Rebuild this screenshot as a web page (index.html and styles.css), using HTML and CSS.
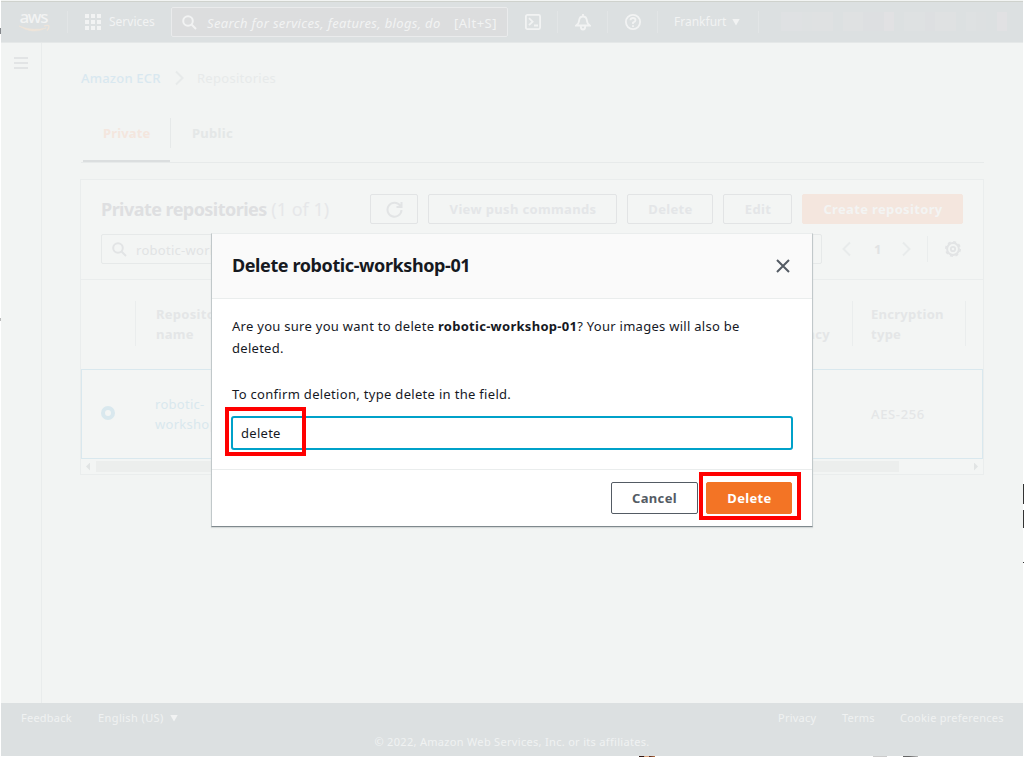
FILE: index.html
```html
<!DOCTYPE html>
<html lang="en">
<head>
<meta charset="utf-8">
<title>Amazon ECR</title>
<link rel="stylesheet" href="styles.css">
</head>
<body>
<div class="app">
  <header class="topbar">
    <div class="logo"><svg width="32" height="24" viewBox="0 0 32 24"><text x="0.5" y="12" class="aws-text" textLength="29">aws</text><path d="M0 15Q14 24 27 17Q14 20.500 0 15z" fill="#efe4d9" stroke="#efe4d9" stroke-width=".6"/><path d="M25 15q5-1.500 5 .5q0 2-2 4" fill="none" stroke="#efe4d9" stroke-width="1.200"/></svg></div>
    <i class="vline v1"></i>
    <svg class="grid-icon" width="16" height="16" viewBox="0 0 16 16" fill="#f2f3f3"><path d="M0 0h4v4H0zM6 0h4v4H6zM12 0h4v4h-4zM0 6h4v4H0zM6 6h4v4H6zM12 6h4v4h-4zM0 12h4v4H0zM6 12h4v4H6zM12 12h4v4h-4z"/></svg>
    <span class="services">Services</span>
    <div class="topsearch">
      <svg width="15" height="15" viewBox="0 0 15 15" fill="none" stroke="#f2f3f3" stroke-width="2"><circle cx="6" cy="6" r="4.800"/><path d="M9.500 9.500l4.500 4.500"/></svg>
      <span class="ph">Search for services, features, blogs, do</span><span class="key">[Alt+S]</span>
    </div>
    <svg class="ti t1" width="16" height="16" viewBox="0 0 16 16" fill="none" stroke="#f2f3f3" stroke-width="1.800"><rect x=".9" y=".9" width="14.200" height="14.200" rx="1.500"/><path d="M4 4.200l3.600 3.500L4 11.200M9 11.500h4"/></svg>
    <i class="vline v2"></i>
    <svg class="ti t2" width="16" height="17" viewBox="0 0 16 17" fill="none" stroke="#f2f3f3" stroke-width="1.800"><path d="M1.200 11.500q2.800-2 3-5.500Q4.700 2.500 8 2.500T11.800 6q.2 3.500 3 5.500zM8 0v2.500M5.800 12.500q0 3 2.200 3t2.200-3"/></svg>
    <i class="vline v3"></i>
    <svg class="ti t3" width="16" height="16" viewBox="0 0 16 16" fill="none" stroke="#f2f3f3" stroke-width="1.800"><circle cx="8" cy="8" r="7.100"/><path d="M5.500 6.300Q5.500 4 8 4t2.500 2.200Q10.500 7.500 8 8.600V10M8 11.200v1.700"/></svg>
    <i class="vline v4"></i>
    <span class="region">Frankfurt</span><i class="caret"></i>
    <i class="vline v5"></i>
    <div class="account"><i class="m0 slim"></i><i class="m3"></i><i class="m1 slim"></i><i class="m2"></i><i class="m0 slim"></i><i class="m2"></i><i class="m4"></i><i class="m5 slim"></i><i class="m0 slim"></i><i class="m1"></i><i class="m4 slim"></i><i class="m2"></i><i class="m0 slim"></i><i class="m1 slim"></i><i class="m6 slim"></i><i class="m0 slim"></i><i class="m5 slim"></i></div>
  </header>
  <div class="middle">
    <aside class="rail"><i></i><i></i><i></i></aside>
    <main class="content">
      <nav class="crumbs"><span class="link">Amazon ECR</span><svg width="9" height="16" viewBox="0 0 9 16" fill="none" stroke="#e7eaea" stroke-width="2"><path d="M1 1.500l6.500 6.500L1 14.500"/></svg><span class="crumb">Repositories</span></nav>
      <div class="tabs"><div class="tab on"><span>Private</span></div><div class="tab"><span>Public</span></div></div>
      <section class="panel">
        <div class="phead">
          <h2><span class="ptitle">Private repositories</span> <span class="count">(1 of 1)</span></h2>
          <div class="btn b1"><svg width="17" height="17" viewBox="0 0 17 17" fill="none" stroke="#e2e4e5" stroke-width="2"><path d="M14.300 4.800A7 7 0 1 0 15.500 9M15.500 1v5h-5"/></svg></div>
          <div class="btn b2"><span>View push commands</span></div>
          <div class="btn b3"><span>Delete</span></div>
          <div class="btn b4"><span>Edit</span></div>
          <div class="btn b5"><span>Create repository</span></div>
        </div>
        <div class="filter">
          <div class="finput"><svg width="15" height="15" viewBox="0 0 15 15" fill="none" stroke="#e2e4e5" stroke-width="2"><circle cx="6" cy="6" r="4.800"/><path d="M9.500 9.500l4.500 4.500"/></svg><span>robotic-workshop-01</span></div>
          <svg class="prev" width="9" height="16" viewBox="0 0 9 16" fill="none" stroke="#e8ebeb" stroke-width="2"><path d="M8 1.500L1.500 8 8 14.500"/></svg>
          <b class="page">1</b>
          <svg class="next" width="9" height="16" viewBox="0 0 9 16" fill="none" stroke="#e8ebeb" stroke-width="2"><path d="M1 1.500L7.500 8 1 14.500"/></svg>
          <i class="fdiv"></i>
          <svg class="gear" width="16" height="16" viewBox="0 0 16 16" fill="none" stroke="#e2e4e5"><circle cx="8" cy="8" r="7.200" stroke-width="1.600" stroke-dasharray="3 2.655"/><circle cx="8" cy="8" r="5.900" stroke-width="2"/><circle cx="8" cy="8" r="2.200" stroke-width="1.800"/></svg>
        </div>
        <div class="trow thead">
          <div class="c0"></div><div class="c1"><span>Repository<br>name</span></div><div class="c2"><span>frequency</span></div><div class="c3"><span>Encryption<br>type</span></div><div class="c4"></div>
        </div>
        <div class="trow selected">
          <div class="c0"><i class="radio"></i></div><div class="c1"><span>robotic-<br>workshop-01</span></div><div class="c2"></div><div class="c3"><span>AES-256</span></div>
        </div>
        <div class="scroll"><i class="al"></i><i class="thumb"></i><i class="ar"></i></div>
      </section>
    </main>
  </div>
  <footer class="footer">
    <div class="frow"><span class="f1">Feedback</span><span class="f2">English (US)</span><i class="caret"></i><span class="f3">Privacy</span><span class="f4">Terms</span><span class="f5">Cookie preferences</span></div>
    <div class="copy"><span>© 2022, Amazon Web Services, Inc. or its affiliates.</span></div>
  </footer>
</div>
<div class="modal">
  <div class="mhead"><h1><span>Delete robotic-workshop-01</span></h1><svg width="14" height="14" viewBox="0 0 14 14" fill="none" stroke="#545b64" stroke-width="2"><path d="M1 1l12 12M13 1L1 13"/></svg></div>
  <div class="mbody">
    <p><span class="q1">Are you sure you want to delete <b>robotic-workshop-01</b>? Your images will also be</span><br>deleted.</p>
    <label><span class="q2">To confirm deletion, type delete in the field.</span></label>
    <div class="field"><span>delete</span></div>
  </div>
  <div class="mfoot"><div class="mbtn cancel"><span>Cancel</span></div><div class="mbtn primary"><span>Delete</span></div></div>
  <i class="mark mark-field"></i><i class="mark mark-delete"></i>
</div>
<i class="edge e1"></i><i class="edge e2"></i><i class="edge e3"></i><i class="edge e4"></i><i class="edge e5"></i><i class="edge e6"></i><i class="edge e7"></i><i class="edge e8"></i>
</body>
</html>
```
FILE: styles.css
```css
*{box-sizing:border-box}
body{margin:0;width:1024px;height:757px;overflow:hidden;position:relative;background:#fff;font:13px/20px "Noto Sans","Open Sans",sans-serif;letter-spacing:.28px;color:#16191f}
h1,h2,p{margin:0}
i{display:block;flex:none;font-style:normal}
svg{display:block;flex:none}
span{white-space:nowrap}
.app{margin-left:1px;width:1022px;height:756px;display:flex;flex-direction:column;background:#f2f4f3}
.topbar{height:42px;flex:none;border-top:1px solid #cfd2cd;margin-top:1px;background:#dce0e1;border-bottom:1px solid #e5e8e8;display:flex;align-items:center;color:#f2f3f3;font-size:12px;letter-spacing:0}
.logo{margin-left:18px;width:32px;padding-top:2px}
.logo svg{overflow:visible}
.aws-text{font:500 17px "Noto Sans",sans-serif;fill:#f2f3f3}
.vline{width:1px;height:22px;background:#e2e5e6}
.v1{margin-left:16px}
.grid-icon{margin-left:17px}
.services{margin-left:8px;width:62px}
.topsearch{height:30px;width:337px;border:1px solid #eaebec;border-radius:2px;background:#dcddde;display:flex;align-items:center;padding:1px 10px 0 10px;font-size:13px}
.ph{margin-left:10px;width:236px;font-style:italic;letter-spacing:.34px}
.key{margin-left:auto;letter-spacing:.5px}
.t1{margin-left:17px}.v2{margin-left:16px}.t2{margin-left:17px}.v3{margin-left:16px}.t3{margin-left:17px}.v4{margin-left:16px}
.region{margin-left:16px;width:54px}
.caret{width:8px;height:7px;background:#f2f3f3;clip-path:polygon(0 0,100% 0,50% 100%);margin-left:4px}
.v5{margin-left:18px}
.account{display:flex;height:19px;margin:-1px 0 0 12px;width:236px}
.account i{flex:2 1 0}
.account .slim{flex-grow:1}
.m0{background:#dce0e1}.m1{background:#dee1e2}.m2{background:#dfe1e2}.m3{background:#dfe1e3}.m4{background:#dddfe1}.m5{background:#e1e1e3}.m6{background:#dde0e1}
.middle{flex:1;display:flex;min-height:0}
.rail{width:41px;border-right:1px solid #e9ecec;padding:14px 0 0 13px;display:flex;flex-direction:column;gap:3px}
.rail i{width:14px;height:2px;background:#e2e4e5}
.content{margin-left:39px;width:903px}
.crumbs{display:flex;align-items:center;height:20px;margin-top:25px;color:#e7eaea}
.crumbs svg{margin:0 13px 0 14px}
.link{color:#d9e8f0;width:80px;font-weight:500;letter-spacing:.2px}
.tabs{display:flex;height:45px;margin-top:30px;border-bottom:1px solid #e7eaea;font-weight:700;color:#e4e7e7}
.tab{position:relative;padding:5px 20px 0}
.tab.on{color:#f4e6de;width:87px;margin-left:2px;border-bottom:2px solid #dbdedf}
.tab.on span{letter-spacing:.15px}
.tab.on:after{content:"";position:absolute;right:-1px;top:0;width:1px;height:30px;background:#e6e9e9}
.tab:last-child{padding-left:22px}
.panel{margin:16px 0 0 -1px;width:904px;height:296px;border:1px solid #eaeded;background:#f3f5f4}
.phead{height:30px;margin:14px 20px 0;display:flex}
h2{font-size:18px;line-height:30px;width:269px;color:#dedfe1;white-space:nowrap;letter-spacing:0}
.ptitle{font-weight:700;letter-spacing:-.55px}
.count{font-weight:400;color:#e6e7e9}
.btn{height:30px;border:1px solid #e2e4e5;border-radius:2px;display:flex;align-items:center;justify-content:center;font-weight:700;letter-spacing:.35px;color:#e4e6e8;flex:none}
.btn span{padding-left:1px}
.b1{width:48px}.b2{width:189px;margin-left:10px}.b3{width:86px;margin-left:10px}.b4{width:69px;margin-left:10px}.b5{width:161px;margin-left:10px;background:#f4e6de;border-color:#f4e6de;color:#f3f4f3}
.filter{display:flex;align-items:center;height:30px;margin:10px 20px 0}
.finput{width:721px;height:30px;border:1px solid #e6e9e9;border-radius:2px;padding-left:10px;display:flex;align-items:center;color:#e1e3e4}
.finput span{margin:2px 0 0 9px}
.prev{margin-left:20px}.page{width:8px;margin-left:23px;color:#e1e3e4}.next{margin-left:20px}.fdiv{height:26px;width:1px;background:#eaeded;margin-left:16px}.gear{margin-left:17px}
.trow{display:flex;color:#e4e6e7}
.thead{border-top:1px solid #eaeded;margin-top:15px;height:90px;padding:21px 0 23px;font-weight:700}
.trow>div{flex:none}
.c0{width:55px}.thead .c0,.thead .c2,.thead .c3{border-right:1px solid #eaeded}
.c1{width:559px;padding:3px 0 0 20px}.c2{width:158px;padding:23px 22px 0 0;text-align:right}.c3{width:113px;padding:3px 0 0 18px}
.selected{border:1px solid #d9e8ee;height:90px;width:902px}
.selected .c0{display:flex;align-items:center;padding:0 0 2px 19px}.radio{width:14px;height:14px;border:4px solid #d9e8ee;border-radius:50%}
.selected .c1{padding-top:24px;padding-left:18px;color:#d9e8ee}.selected .c3{padding-top:34px;padding-left:17px;font-weight:500;letter-spacing:.65px}
.scroll{height:14px;display:flex;align-items:center;padding:1px 5px 0}
.thumb{width:803px;height:11px;background:#eceeed;margin-left:6px}
.al,.ar{width:4px;height:8px;background:#e1e4e4;clip-path:polygon(0 50%,100% 0,100% 100%)}.ar{margin-left:auto;clip-path:polygon(0 0,100% 50%,0 100%)}
.footer{height:53px;flex:none;background:#dce0e1;color:#f0f2f2;font-size:11px;letter-spacing:.24px}
.frow{display:flex;align-items:center;height:20px;margin-top:5px;padding-left:20px}
.frow span{flex:none}.f1{width:77px}.f2{width:68px;letter-spacing:.4px}.f3{width:64px;margin-left:600px}.f4{width:58px}
.copy{text-align:center;margin-top:4px;letter-spacing:.31px}
.modal{position:absolute;left:211px;top:233px;width:602px;height:294px;background:#fff;border:1px solid #c1c8ca;border-top-color:#eaeded;border-bottom-color:#7f898d;display:flex;flex-direction:column;box-shadow:0 1px 1px #d5d9d9}
.mhead{height:65px;background:#fafafa;border-bottom:1px solid #eaeded;display:flex;align-items:center;justify-content:space-between;padding:0 22px 0 20px}
h1{font-size:18px;line-height:22px;font-weight:700;letter-spacing:-.4px;padding-bottom:2px}
.mbody{height:170px;padding:16px 19px 0 20px;line-height:22px}
.mbody label{display:block;margin-top:24px;letter-spacing:.31px}
.field{border:2px solid #00a1c9;border-radius:3px;height:34px;margin:11px 0 0 -1px;padding:0 8px;line-height:30px}
.mfoot{border-top:1px solid #eaeded;flex:1;padding:12px 20px 0 0;display:flex;justify-content:flex-end;gap:8px}
.mbtn{height:32px;width:87px;border-radius:2px;display:flex;align-items:center;justify-content:center;font-weight:700;letter-spacing:.35px;border:1px solid #545b64;color:#545b64}
.primary{background:#f37425;border-color:#f37425;color:#fff;width:86px}
.primary span{padding-left:1px}
.mark{position:absolute;border:4px solid #f00}
.mark-field{left:13px;top:173px;width:81px;height:49px}
.mark-delete{left:487px;top:238px;width:102px;height:48px}
.edge{position:absolute;background:#333}
.e1{left:1023px;top:484px;width:1px;height:20px}.e2{left:1023px;top:510px;width:1px;height:18px}.e3{left:1023px;top:562px;width:1px;height:1px}
.e4{left:0;top:28px;width:1px;height:6px;background:#85888c}.e5{left:639px;top:756px;width:16px;height:1px;background:linear-gradient(90deg,#301713 30%,#e4ad86 35% 60%,#51241b 65%,#b97342)}
.e6{left:873px;top:756px;width:14px;height:1px;background:#ccc}.e7{left:903px;top:756px;width:15px;height:1px;background:linear-gradient(90deg,#666 40%,#bbb)}.e8{left:0;top:318px;width:1px;height:3px;background:#bbb}
```
